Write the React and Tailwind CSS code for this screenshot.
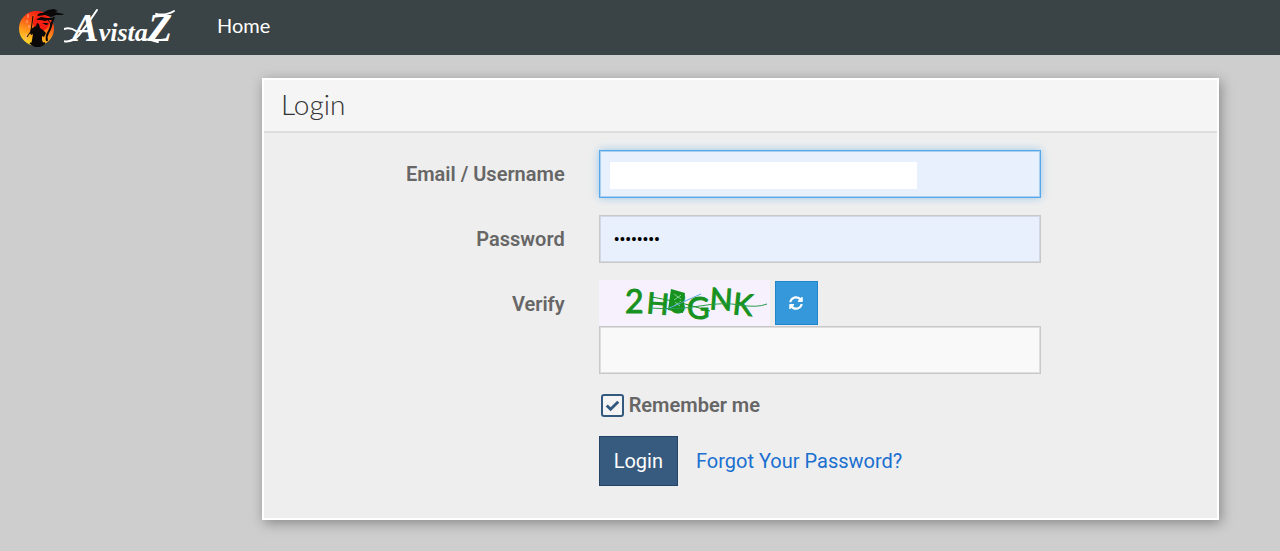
import { useState } from 'react';
import { FaSyncAlt } from 'react-icons/fa';

const fieldClasses = 'block w-full h-12 px-[14px] border text-black outline-none';

function LogoMark() {
  return (
    <svg className="w-[46px] h-10" viewBox="0 0 46 40" aria-hidden="true">
      <defs>
        <linearGradient id="sun" x1="0.7" y1="0" x2="0.35" y2="1">
          <stop offset="0" stopColor="#f51313" />
          <stop offset="0.3" stopColor="#fb4a14" />
          <stop offset="0.65" stopColor="#fd9a1c" />
          <stop offset="1" stopColor="#ffe02a" />
        </linearGradient>
      </defs>
      <circle cx="18.5" cy="20.5" r="17.5" fill="url(#sun)" />
      <circle cx="23" cy="15" r="8" fill="#f41d12" />
      <g fill="#0a0808">
        <path d="M26 4l4-2 6-1 4 2-3 1 4 1 5 1-2 1-6 0-5 2-6-2-7 1-1-1 3-2 3 0z" />
        <path d="M19 11l4-2 6 1 5 0 2 2-6 0-3 1-4-1-4 0z" />
        <path d="M24 15l5 0 2 1-3 1z" />
        <path d="M18 18l1-3 2 1 1 4 3 2 3 3-2 4-2-1 0 4 2 5-4 2-5 0-4-2 1-5 1-6-2 1-1-2 1-4 3-2z" />
      </g>
      <g fill="none" stroke="#0a0808">
        <path d="M36 9Q34 14 33 18T30 25T29 33" strokeWidth="2" />
        <path d="M33 18Q33 14 29 11" strokeWidth="1" />
        <path d="M15 8L13 23L9 29" strokeWidth="1" />
        <path d="M12 35Q18 39 27 35" strokeWidth="2" />
      </g>
      <path d="M10 6v4M9 12v3M11 17v3M8 26v6" stroke="#ffb08a" strokeWidth="1" fill="none" />
    </svg>
  );
}

function LogoWordmark() {
  return (
    <svg className="w-[118px] h-[55px]" viewBox="0 0 118 55" aria-label="AvistaZ" role="img">
      <text
        x="8"
        y="41"
        fill="#fff"
        fontFamily='"Liberation Serif", serif'
        fontStyle="italic"
        fontWeight="700"
        fontSize="40"
      >
        A<tspan fontSize="26">vista</tspan>Z
      </text>
      <g fill="none" stroke="#fff" strokeLinecap="round">
        <path d="M33 10Q24 24 15 35Q8 43 -1 41" strokeWidth="2" />
        <path d="M0 29Q6 27 12 31" strokeWidth="2" />
        <path d="M92 14Q102 16 110 11" strokeWidth="2" />
        <path d="M78 39Q86 39 94 42" strokeWidth="2" />
      </g>
    </svg>
  );
}

function Navbar() {
  return (
    <header className="h-[55px] flex items-center bg-[#3a4345] text-white">
      <a href="#" className="flex items-center ml-[18px]">
        <LogoMark />
        <LogoWordmark />
      </a>
      <nav className="ml-[35px] pb-[2px]">
        <a href="#" className="font-['Lato',sans-serif] text-xl leading-6">Home</a>
      </nav>
    </header>
  );
}

function Captcha() {
  return (
    <svg className="w-[171px] h-[46px] overflow-visible bg-[#f6f1fd]" viewBox="0 0 171 46" role="img">
      <g fill="#18921f" stroke="#18921f" strokeWidth="1" fontFamily="Lato, sans-serif" fontSize="32">
        <text x="26" y="33">2</text>
        <text x="47" y="33" fontSize="29" transform="rotate(5 47 33)">H</text>
        <text x="70" y="32" fontSize="28" transform="rotate(5 70 32)">8</text>
        <text x="88" y="39" fontSize="31">G</text>
        <text x="110" y="29" fontSize="30" transform="rotate(4 110 29)">N</text>
        <text x="133" y="34" fontSize="30" transform="rotate(6 133 34)">K</text>
      </g>
      <path d="M72 9l14 4-2 20-15-3z" fill="#18921f" />
      <path d="M75 14l7 5M82 15l-7 5M76 22l5 4M82 21l-7 5" stroke="#7fcf88" strokeWidth="1" />
      <path d="M66 30L102 14" stroke="#5da9e8" strokeWidth="1" />
      <path d="M51 28Q78 30 101 26T141 25T168 24" fill="none" stroke="#279b4a" strokeWidth="1" />
      <path d="M53 17L79 22L111 31" fill="none" stroke="#18921f" strokeWidth="1" />
    </svg>
  );
}

function Row({ label, htmlFor, children }) {
  return (
    <div className="grid grid-cols-12">
      <div className="col-span-4 px-[17px] pt-3 text-right">
        {label && (
          <label htmlFor={htmlFor} className="font-semibold text-[#666666]">{label}</label>
        )}
      </div>
      <div className="col-span-6 px-[17px]">{children}</div>
    </div>
  );
}

function LoginForm() {
  const [password, setPassword] = useState('password');
  const [remember, setRemember] = useState(true);

  return (
    <form
      className="flex flex-col gap-[17px] pt-[17px] pb-8 text-xl leading-6"
      onSubmit={(e) => e.preventDefault()}
    >
      <Row label="Email / Username" htmlFor="username">
        <div className="relative">
          <input
            id="username"
            type="text"
            className={`${fieldClasses} text-xl border-[#57a8e8] bg-[#e8f0fe] shadow-[inset_0_0_0_1px_#a9cff3,0_0_8px_rgba(102,175,233,0.6)]`}
          />
          <span className="absolute left-[11px] top-3 w-[307px] h-[27px] bg-white" />
        </div>
      </Row>

      <Row label="Password" htmlFor="password">
        <input
          id="password"
          type="password"
          value={password}
          onChange={(e) => setPassword(e.target.value)}
          className={`${fieldClasses} text-base font-bold border-[#c8c8c8] bg-[#e8f0fe] shadow-[inset_0_0_0_1px_#d3d8e2]`}
        />
      </Row>

      <Row label="Verify" htmlFor="captcha">
        <div className="flex items-center gap-[5px]">
          <Captcha />
          <button
            type="button"
            aria-label="Refresh"
            className="w-[43px] h-11 flex items-center justify-center bg-[#3498db] border border-[#1f86cb] text-white"
          >
            <FaSyncAlt className="w-[14px] h-[14px]" />
          </button>
        </div>
        <input
          id="captcha"
          type="text"
          className={`${fieldClasses} text-xl border-[#c8c8c8] bg-[#f9f9f9] shadow-[inset_0_0_0_1px_#dedede]`}
        />
      </Row>

      <Row>
        <label className="flex items-center gap-[5px] pl-[2px] pt-[2px] pb-[2px] font-semibold text-[#666666]">
          <span className="relative w-[23px] h-[23px]">
            <input
              type="checkbox"
              checked={remember}
              onChange={(e) => setRemember(e.target.checked)}
              className="block appearance-none w-full h-full border-2 border-[#34597f] rounded-[3px] bg-[#f4f4f4]"
            />
            {remember && (
              <svg className="absolute inset-0 w-full h-full pointer-events-none" viewBox="0 0 24 24">
                <path d="M6 12l4 4 8-8" fill="none" stroke="#34597f" strokeWidth="3" />
              </svg>
            )}
          </span>
          Remember me
        </label>
      </Row>

      <Row>
        <div className="flex items-center gap-[18px]">
          <button
            type="submit"
            className="h-[50px] px-[14px] bg-[#375a7f] border border-[#244465] text-white"
          >
            Login
          </button>
          <a href="#" className="text-[#1a6fd0]">Forgot Your Password?</a>
        </div>
      </Row>
    </form>
  );
}

function App() {
  return (
    <div className="min-h-screen bg-[#cecece] font-['Roboto',sans-serif]">
      <Navbar />
      <main className="pl-[262px] pr-[61px] pt-[23px] pb-[30px]">
        <section className="border-2 border-white bg-[#eeeeee] shadow-[2px_3px_12px_rgba(0,0,0,0.35)]">
          <h1 className="h-[53px] px-[17px] border-b-2 border-[#dddddd] bg-[#f5f5f5] font-['Lato',sans-serif] font-light text-[28px] leading-[48px] text-[#333333]">
            Login
          </h1>
          <LoginForm />
        </section>
      </main>
    </div>
  );
}

export default App;
